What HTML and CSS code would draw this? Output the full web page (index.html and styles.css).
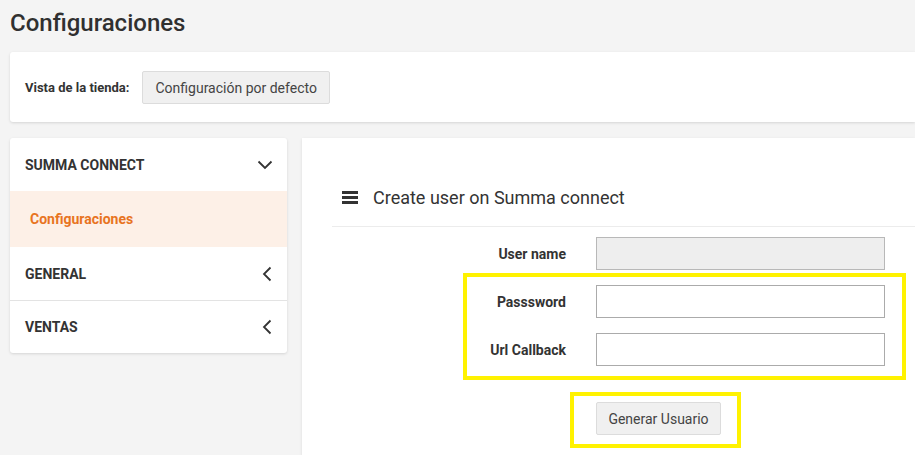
FILE: index.html
```html
<!DOCTYPE html>
<html lang="es">
<head>
<meta charset="utf-8">
<title>Configuraciones</title>
<link rel="stylesheet" href="styles.css">
</head>
<body>
<div class="page">
  <h1 class="title">Configuraciones</h1>

  <div class="store-card">
    <span class="store-label">Vista de la tienda:</span>
    <button class="btn store-btn">Configuración por defecto</button>
  </div>

  <div class="content">
    <nav class="sidebar">
      <div class="side-row side-open">
        <span>SUMMA CONNECT</span>
        <svg class="chev-down" width="16" height="10" viewBox="0 0 16 10"><path d="M1.5 1.5 L8 8 L14.5 1.5" fill="none" stroke="#333" stroke-width="1.8"/></svg>
      </div>
      <div class="side-sub">Configuraciones</div>
      <div class="side-row side-sep">
        <span>GENERAL</span>
        <svg class="chev-left" width="10" height="16" viewBox="0 0 10 16"><path d="M8.5 1.5 L2 8 L8.5 14.5" fill="none" stroke="#333" stroke-width="1.8"/></svg>
      </div>
      <div class="side-row side-last">
        <span>VENTAS</span>
        <svg class="chev-left" width="10" height="16" viewBox="0 0 10 16"><path d="M8.5 1.5 L2 8 L8.5 14.5" fill="none" stroke="#333" stroke-width="1.8"/></svg>
      </div>
    </nav>

    <main class="panel">
      <div class="panel-head">
        <svg class="menu-icon" width="16" height="13" viewBox="0 0 16 13"><rect x="0" y="0" width="16" height="3" fill="#333"/><rect x="0" y="5" width="16" height="3" fill="#333"/><rect x="0" y="10" width="16" height="3" fill="#333"/></svg>
        <span class="panel-title">Create user on Summa connect</span>
      </div>
      <form class="form">
        <label class="f-label">User name</label>
        <input class="f-input f-disabled" type="text" disabled>
        <label class="f-label">Passsword</label>
        <input class="f-input" type="password">
        <label class="f-label">Url Callback</label>
        <input class="f-input" type="text">
        <span></span>
        <div class="f-actions"><button type="button" class="btn gen-btn">Generar Usuario</button></div>
      </form>
    </main>
  </div>
</div>

<div class="hl hl-fields"></div>
<div class="hl hl-button"></div>
</body>
</html>
```

FILE: styles.css
```css
html, body {
  margin: 0;
  padding: 0;
}
body {
  width: 915px;
  height: 455px;
  overflow: hidden;
  background: #f4f4f4;
  font-family: Roboto, "Noto Sans", Arial, sans-serif;
  color: #333;
  position: relative;
}
.page {
  padding-left: 10px;
}
.title {
  margin: 0;
  padding-top: 9px;
  height: 52px;
  box-sizing: border-box;
  font-size: 24px;
  line-height: 28px;
  font-weight: 500;
  color: #303030;
}
.store-card {
  height: 70px;
  background: #fff;
  border-radius: 3px 0 0 3px;
  box-shadow: 0 1px 3px rgba(0,0,0,0.13);
  display: flex;
  align-items: center;
  padding-left: 15px;
  gap: 13px;
}
.store-label {
  font-size: 13px;
  font-weight: 700;
  color: #333;
}
.btn {
  font-family: Roboto, "Noto Sans", Arial, sans-serif;
  font-size: 14px;
  color: #444;
  background: #f0f0f0;
  border: 1px solid #dcdcdc;
  border-radius: 2px;
  height: 33px;
  padding: 0 12px;
  white-space: nowrap;
  cursor: pointer;
}
.store-btn {
  margin-top: 1px;
}
.content {
  display: flex;
  gap: 15px;
  margin-top: 16px;
}
.sidebar {
  width: 277px;
  flex: none;
  align-self: flex-start;
  background: #fff;
  border-radius: 3px;
  box-shadow: 0 1px 3px rgba(0,0,0,0.13);
  overflow: hidden;
}
.side-row {
  display: flex;
  align-items: center;
  justify-content: space-between;
  padding: 0 15px;
  font-size: 14px;
  font-weight: 700;
  color: #333;
}
.side-open { height: 53px; }
.side-sep { height: 53px; border-bottom: 1px solid #e3e3e3; }
.side-last { height: 52px; }
.chev-down { margin-right: -1px; }
.side-sub {
  height: 56px;
  display: flex;
  align-items: center;
  padding-left: 20px;
  background: #fdf0e7;
  color: #e8741f;
  font-size: 14px;
  font-weight: 700;
}
.panel {
  flex: 1;
  height: 317px;
  box-sizing: border-box;
  background: #fff;
  box-shadow: 0 1px 3px rgba(0,0,0,0.10);
  padding: 30px 0 0 30px;
}
.panel-head {
  height: 58px;
  border-bottom: 1px solid #ececec;
  display: flex;
  align-items: center;
  padding-left: 10px;
  gap: 15px;
}
.menu-icon { margin-top: 1px; }
.panel-title {
  font-size: 18px;
  color: #333;
}
.form {
  display: grid;
  grid-template-columns: 234px 289px;
  column-gap: 30px;
  row-gap: 15px;
  margin-top: 10px;
  align-items: center;
}
.f-label {
  text-align: right;
  font-size: 14px;
  font-weight: 700;
  color: #333;
}
.f-input {
  box-sizing: border-box;
  height: 33px;
  width: 289px;
  border: 1px solid #ababab;
  background: #fff;
  margin: 0;
  padding: 0 8px;
  font-family: inherit;
}
.f-disabled {
  background: #eeeeee;
  border-color: #b8b8b8;
}
.f-actions {
  margin-top: 21px;
}
.gen-btn {
  width: 125px;
  padding: 0;
}
.hl {
  position: absolute;
  border: 4px solid #fff200;
  box-sizing: border-box;
}
.hl-fields {
  left: 463px;
  top: 273px;
  width: 443px;
  height: 107px;
}
.hl-button {
  left: 570px;
  top: 392px;
  width: 171px;
  height: 56px;
}
```
